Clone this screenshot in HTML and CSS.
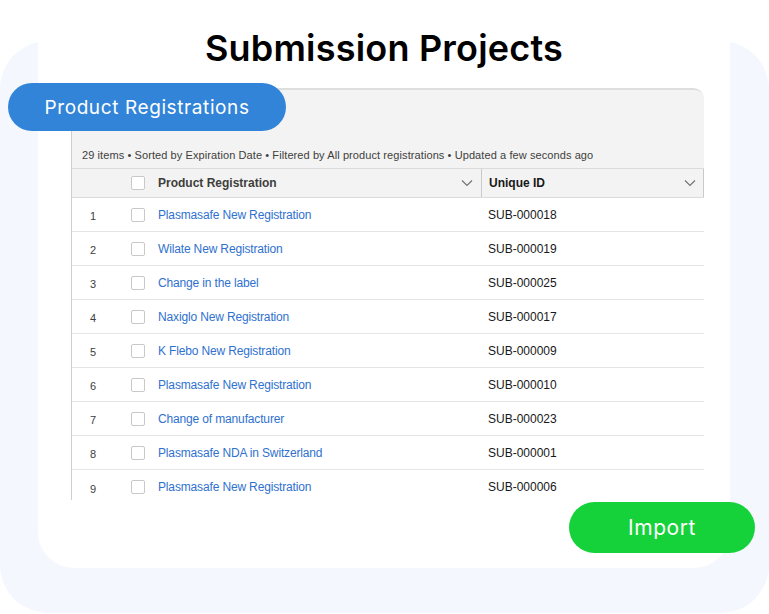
FILE: index.html
```html
<!DOCTYPE html>
<html>
<head>
<meta charset="utf-8">
<link rel="stylesheet" href="styles.css">
</head>
<body>
<div class="frame">
  <div class="card">
    <h1 class="title">Submission Projects</h1>
    <div class="panel">
      <div class="panel-head">
        <div class="info">29 items • Sorted by Expiration Date • Filtered by All product registrations • Updated a few seconds ago</div>
      </div>
      <div class="row head-row">
        <div class="c-num"></div>
        <div class="c-chk"><span class="box"></span></div>
        <div class="c-name">Product Registration<svg class="chev" viewBox="0 0 12 8" width="12" height="8"><path d="M1 1.5l5 5 5-5" fill="none" stroke="#747474" stroke-width="1.2"/></svg></div>
        <div class="c-id">Unique ID<svg class="chev" viewBox="0 0 12 8" width="12" height="8"><path d="M1 1.5l5 5 5-5" fill="none" stroke="#747474" stroke-width="1.2"/></svg></div>
      </div>
      <div class="row"><div class="c-num">1</div><div class="c-chk"><span class="box"></span></div><div class="c-name"><a>Plasmasafe New Registration</a></div><div class="c-id">SUB-000018</div></div>
      <div class="row"><div class="c-num">2</div><div class="c-chk"><span class="box"></span></div><div class="c-name"><a>Wilate New Registration</a></div><div class="c-id">SUB-000019</div></div>
      <div class="row"><div class="c-num">3</div><div class="c-chk"><span class="box"></span></div><div class="c-name"><a>Change in the label</a></div><div class="c-id">SUB-000025</div></div>
      <div class="row"><div class="c-num">4</div><div class="c-chk"><span class="box"></span></div><div class="c-name"><a>Naxiglo New Registration</a></div><div class="c-id">SUB-000017</div></div>
      <div class="row"><div class="c-num">5</div><div class="c-chk"><span class="box"></span></div><div class="c-name"><a>K Flebo New Registration</a></div><div class="c-id">SUB-000009</div></div>
      <div class="row"><div class="c-num">6</div><div class="c-chk"><span class="box"></span></div><div class="c-name"><a>Plasmasafe New Registration</a></div><div class="c-id">SUB-000010</div></div>
      <div class="row"><div class="c-num">7</div><div class="c-chk"><span class="box"></span></div><div class="c-name"><a>Change of manufacturer</a></div><div class="c-id">SUB-000023</div></div>
      <div class="row"><div class="c-num">8</div><div class="c-chk"><span class="box"></span></div><div class="c-name"><a>Plasmasafe NDA in Switzerland</a></div><div class="c-id">SUB-000001</div></div>
      <div class="row last"><div class="c-num">9</div><div class="c-chk"><span class="box"></span></div><div class="c-name"><a>Plasmasafe New Registration</a></div><div class="c-id">SUB-000006</div></div>
    </div>
    <div class="pill pill-blue">Product Registrations</div>
    <div class="pill pill-green">Import</div>
  </div>
</div>
</body>
</html>
```
FILE: styles.css
```css
* { box-sizing: border-box; }
html, body { margin: 0; padding: 0; }
body {
  width: 769px;
  height: 614px;
  overflow: hidden;
  background: #ffffff;
  font-family: "Liberation Sans", Arial, sans-serif;
}
.frame {
  display: flex;
  flex-direction: column;
  margin-top: 41px;
  height: 572px;
  border-radius: 48px;
  background: #f4f8fe;
  padding: 0 39px 0 38px;
}
.card {
  position: relative;
  margin-top: -41px;
  height: 568px;
  border-radius: 36px;
  background: #ffffff;
  display: flex;
  flex-direction: column;
}
.title {
  margin: 26px 0 0 0;
  height: 44px;
  line-height: 44px;
  text-align: center;
  font-family: Inter, "Open Sans", sans-serif;
  font-weight: 600;
  font-size: 36px;
  letter-spacing: 0.2px;
  color: #000;
}
.panel {
  margin: 18px 0 0 33px;
  width: 633px;
  height: 412px;
  overflow: hidden;
  border-left: 1px solid #cfcfcf;
  border-top-right-radius: 10px;
}
.panel-head {
  height: 80px;
  background: #f3f3f3;
  border-top: 2px solid #dedede;
  border-top-right-radius: 10px;
  display: flex;
  align-items: flex-end;
  padding: 0 0 7px 10px;
}
.info {
  font-size: 11px;
  letter-spacing: 0.09px;
  color: #3e3e3c;
  white-space: nowrap;
}
.row {
  display: grid;
  grid-template-columns: 42px 44px 323px 223px;
  height: 34px;
  border-bottom: 1px solid #e5e5e5;
  align-items: center;
  font-size: 12px;
}
.row.last { border-bottom: none; }
.head-row {
  height: 30px;
  background: #f3f3f3;
  border-top: 1px solid #dddbda;
  border-bottom: 1px solid #dddbda;
  font-weight: 700;
  color: #3e3e3c;
}
.c-num {
  text-align: center;
  font-size: 11px;
  color: #3e3e3c;
  padding-top: 3px;
}
.c-chk {
  padding-left: 17px;
  display: flex;
  align-items: center;
}
.box {
  width: 14px;
  height: 14px;
  border: 1px solid #c9c9c9;
  border-radius: 2px;
  background: #fff;
}
.c-name a {
  color: #2f71cf;
  text-decoration: none;
  letter-spacing: -0.15px;
}
.c-id {
  padding-left: 7px;
  color: #181818;
}
.head-row .c-name,
.head-row .c-id {
  display: flex;
  align-items: center;
  justify-content: space-between;
  height: 100%;
  padding-right: 8px;
}
.head-row .c-id {
  border-left: 1px solid #c9c9c9;
  border-right: 1px solid #c9c9c9;
  padding-right: 7px;
}
.chev { display: block; }
.pill {
  position: absolute;
  display: flex;
  align-items: center;
  justify-content: center;
  border-radius: 26px;
  color: #ffffff;
  font-family: Inter, "Open Sans", sans-serif;
  font-weight: 400;
}
.pill-blue {
  left: -30px;
  top: 83px;
  width: 278px;
  height: 48px;
  background: #3184d8;
  font-size: 19px;
  letter-spacing: 0.6px;
}
.pill-green {
  left: 531px;
  top: 502px;
  width: 186px;
  height: 51px;
  background: #16d23a;
  font-size: 21px;
  letter-spacing: 0.6px;
}
```
